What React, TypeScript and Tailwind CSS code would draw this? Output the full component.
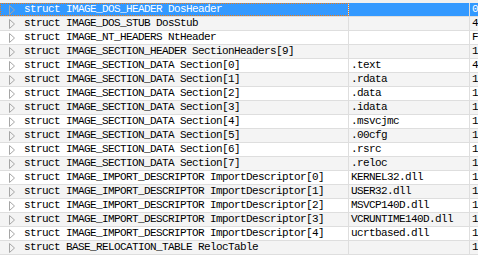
const rows: [string, string, string][] = [
  ['struct IMAGE_DOS_HEADER DosHeader', '', '0'],
  ['struct IMAGE_DOS_STUB DosStub', '', '4'],
  ['struct IMAGE_NT_HEADERS NtHeader', '', 'F'],
  ['struct IMAGE_SECTION_HEADER SectionHeaders[9]', '', '1'],
  ['struct IMAGE_SECTION_DATA Section[0]', '.text', '4'],
  ['struct IMAGE_SECTION_DATA Section[1]', '.rdata', '1'],
  ['struct IMAGE_SECTION_DATA Section[2]', '.data', '1'],
  ['struct IMAGE_SECTION_DATA Section[3]', '.idata', '1'],
  ['struct IMAGE_SECTION_DATA Section[4]', '.msvcjmc', '1'],
  ['struct IMAGE_SECTION_DATA Section[5]', '.00cfg', '1'],
  ['struct IMAGE_SECTION_DATA Section[6]', '.rsrc', '1'],
  ['struct IMAGE_SECTION_DATA Section[7]', '.reloc', '1'],
  ['struct IMAGE_IMPORT_DESCRIPTOR ImportDescriptor[0]', 'KERNEL32.dll', '1'],
  ['struct IMAGE_IMPORT_DESCRIPTOR ImportDescriptor[1]', 'USER32.dll', '1'],
  ['struct IMAGE_IMPORT_DESCRIPTOR ImportDescriptor[2]', 'MSVCP140D.dll', '1'],
  ['struct IMAGE_IMPORT_DESCRIPTOR ImportDescriptor[3]', 'VCRUNTIME140D.dll', '1'],
  ['struct IMAGE_IMPORT_DESCRIPTOR ImportDescriptor[4]', 'ucrtbased.dll', '1'],
  ['struct BASE_RELOCATION_TABLE RelocTable', '', '1'],
];

function Expander() {
  return (
    <svg width="6" height="10" viewBox="0 0 6 10" className="shrink-0">
      <path d="M0.5 0.5 L5.5 5 L0.5 9.5 Z" fill="none" stroke="#a6a6a6" strokeWidth="1" />
    </svg>
  );
}

export default function App() {
  return (
    <div
      className="w-[478px] h-[258px] overflow-hidden bg-white text-black"
      style={{ fontFamily: '"Liberation Mono", "DejaVu Sans Mono", monospace' }}
    >
      <div className="h-[3px] bg-[#f0f0f0]" />
      {rows.map(([name, sect, val], i) => {
        const selected = i === 0;
        const bg = selected ? 'bg-[#3399ff] text-white' : i % 2 === 1 ? 'bg-[#f4f4f4]' : 'bg-white';
        return (
          <div key={i} className={`flex h-[14px] border-b border-[#dedede] ${bg}`}>
            <div
              className={`flex w-[349px] shrink-0 items-center pl-[9px] border-r border-[#dedede] ${
                selected ? 'outline-1 outline-dotted outline-[#f07a10] -outline-offset-1' : ''
              }`}
            >
              <Expander />
              <span className="ml-[9px] text-[11px] leading-[13px] tracking-[-0.6px] whitespace-nowrap">{name}</span>
            </div>
            <div className="flex w-[121px] shrink-0 items-center pl-[2px] border-r border-[#dedede]">
              <span className="text-[11px] leading-[13px] tracking-[-0.6px] whitespace-nowrap">{sect}</span>
            </div>
            <div className="flex items-center pl-[2px]">
              <span className="text-[11px] leading-[13px] tracking-[-0.6px]">{val}</span>
            </div>
          </div>
        );
      })}
    </div>
  );
}
